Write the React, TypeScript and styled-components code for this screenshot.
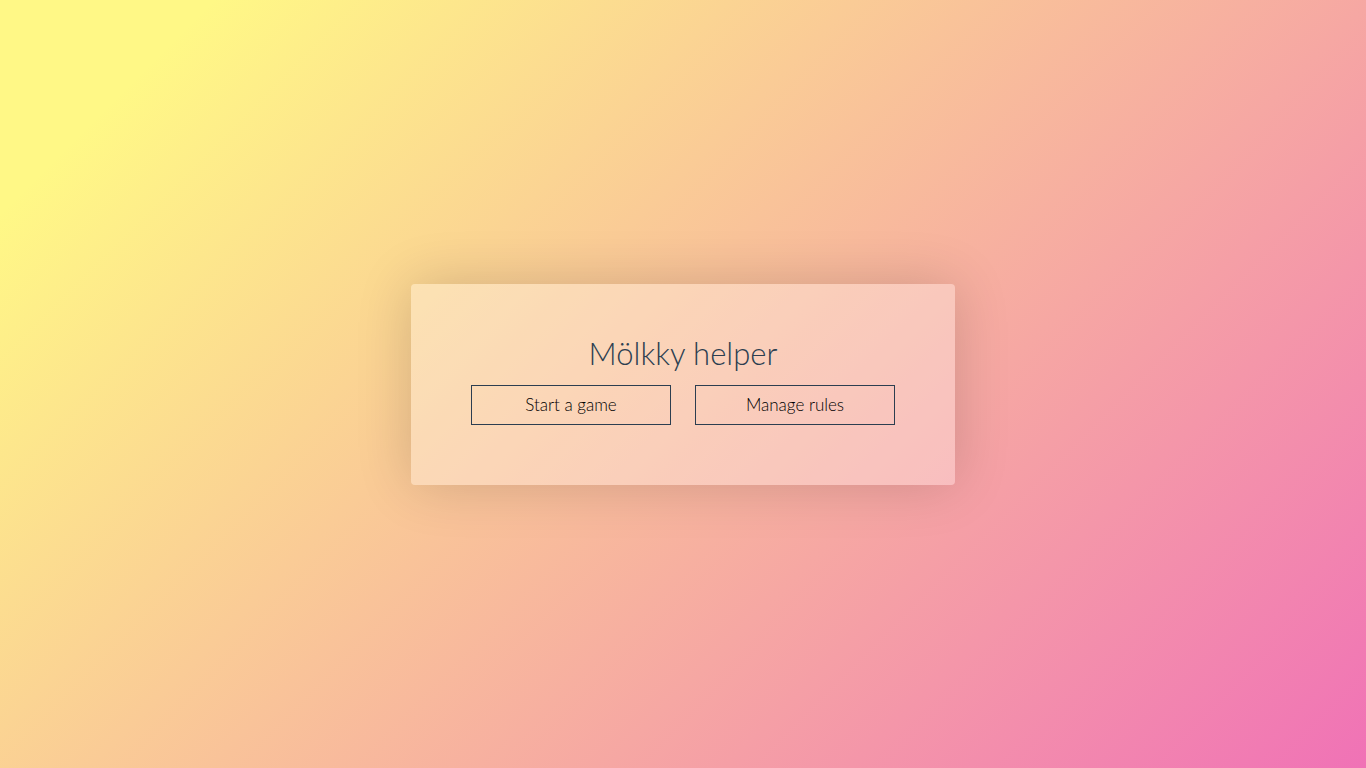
import React from "react";
import styled, { createGlobalStyle } from "styled-components";

const GlobalStyle = createGlobalStyle`
  *, *::before, *::after { box-sizing: border-box; }
  body {
    margin: 0;
    color: #2c3e50;
    font-family: Avenir, Lato, "Liberation Sans", sans-serif;
  }
`;

const Page = styled.main`
  display: flex;
  align-items: center;
  justify-content: center;
  min-height: 100vh;
  padding: 16px;
  background: linear-gradient(135deg, #fff886 10%, #f072b6 100%);
`;

const Card = styled.section`
  padding: 48px 60px 60px;
  border-radius: 4px;
  background: rgba(255, 255, 255, 0.3);
  box-shadow: 0 0 56px rgba(0, 0, 0, 0.16);
  text-align: center;
`;

const Title = styled.h1`
  margin: 0 0 10px;
  font-size: 31px;
  font-weight: 300;
  line-height: 43px;
`;

const Actions = styled.div`
  display: flex;
  flex-wrap: wrap;
  justify-content: center;
  gap: 24px;
`;

const ActionButton = styled.button`
  width: 200px;
  height: 40px;
  padding: 0;
  border: 1px solid #2c3e50;
  background: transparent;
  color: #000;
  font-family: inherit;
  font-size: 17px;
  font-weight: 300;
  cursor: pointer;
`;

export default function App() {
  return (
    <>
      <GlobalStyle />
      <Page>
        <Card>
          <Title>Mölkky helper</Title>
          <Actions>
            <ActionButton type="button">Start a game</ActionButton>
            <ActionButton type="button">Manage rules</ActionButton>
          </Actions>
        </Card>
      </Page>
    </>
  );
}
